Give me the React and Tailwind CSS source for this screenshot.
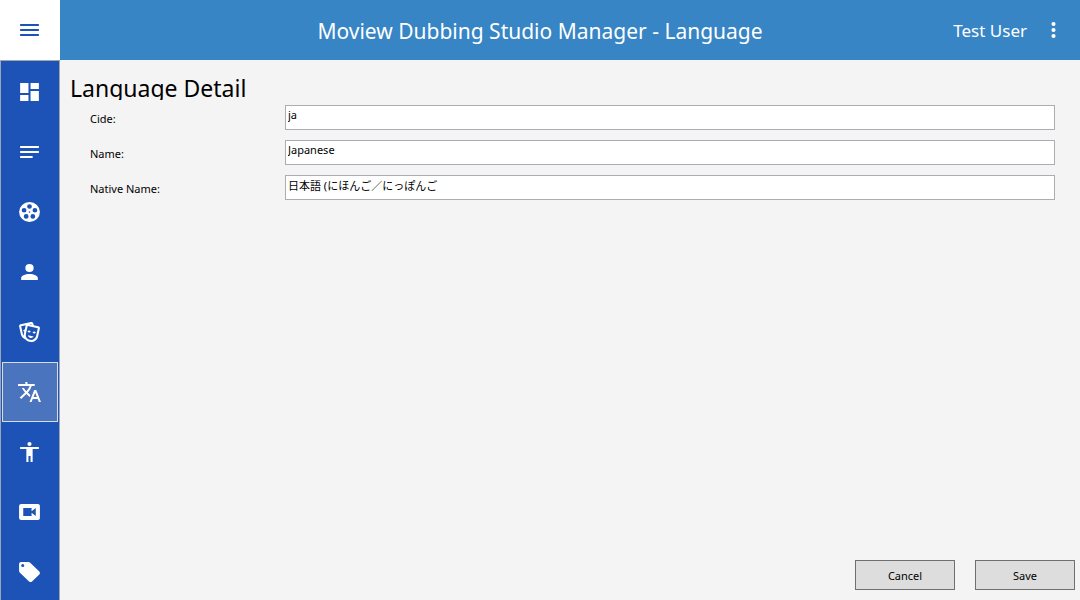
import React from "react";

const ICONS = {
  menu: "M3,6H21V8H3V6M3,11H21V13H3V11M3,16H21V18H3V16Z",
  dashboard: "M13,3V9H21V3M13,21H21V11H13M3,21H11V15H3M3,13H11V3H3V13Z",
  notes: "M3,6H21V8H3V6M3,11H21V13H3V11M3,16H15V18H3V16Z",
  reel:
    "M12,2A10,10 0 0,1 22,12A10,10 0 0,1 12,22A10,10 0 0,1 2,12A10,10 0 0,1 12,2M12,4.2A2.3,2.3 0 0,0 12,8.8A2.3,2.3 0 0,0 12,4.2M6.8,8A2.3,2.3 0 0,0 6.8,12.6A2.3,2.3 0 0,0 6.8,8M17.2,8A2.3,2.3 0 0,0 17.2,12.6A2.3,2.3 0 0,0 17.2,8M8.8,14.1A2.3,2.3 0 0,0 8.8,18.7A2.3,2.3 0 0,0 8.8,14.1M15.2,14.1A2.3,2.3 0 0,0 15.2,18.7A2.3,2.3 0 0,0 15.2,14.1M12,11.2A0.8,0.8 0 0,0 12,12.8A0.8,0.8 0 0,0 12,11.2Z",
  person:
    "M12,4A4,4 0 0,1 16,8A4,4 0 0,1 12,12A4,4 0 0,1 8,8A4,4 0 0,1 12,4M12,14C16.42,14 20,15.79 20,18V20H4V18C4,15.79 7.58,14 12,14Z",
  masks:
    "M8.11,19.45C5.94,18.65 4.22,16.78 3.71,14.35L2.05,6.54C1.81,5.46 2.5,4.4 3.58,4.17L13.35,2.1L13.38,2.09C14.45,1.88 15.5,2.57 15.72,3.63L16.07,5.3L20.42,6.23H20.45C21.5,6.47 22.18,7.53 21.96,8.59L20.3,16.41C19.5,20.18 15.78,22.6 12,21.79C10.42,21.46 9.08,20.61 8.11,19.45V19.45M20,8.18L10.23,6.1L8.57,13.92V13.95C8,16.63 9.73,19.27 12.42,19.84C15.11,20.41 17.77,18.69 18.34,16L20,8.18M16,16.5C15.37,17.57 14.11,18.16 12.83,17.89C11.56,17.62 10.65,16.57 10.5,15.34L16,16.5M8.47,5.17L4,6.13L5.66,13.94L5.67,13.97C5.82,14.68 6.12,15.32 6.53,15.87C6.43,15.1 6.45,14.3 6.62,13.5L7.05,11.5C6.6,11.42 6.21,11.17 6,10.81C6.06,10.2 6.56,9.66 7.25,9.5C7.33,9.5 7.4,9.5 7.5,9.5L8.28,5.69C8.32,5.5 8.38,5.33 8.47,5.17M15.03,12.23C15.35,11.7 16.03,11.42 16.72,11.57C17.41,11.71 17.91,12.24 18,12.86C17.67,13.38 17,13.66 16.3,13.5C15.61,13.37 15.11,12.84 15.03,12.23M10.15,11.19C10.47,10.66 11.14,10.38 11.83,10.53C12.5,10.67 13.03,11.21 13.11,11.82C12.78,12.34 12.11,12.63 11.42,12.5C10.73,12.33 10.23,11.8 10.15,11.19M11.97,4.43L13.93,4.85L13.77,4.05L11.97,4.43Z",
  translate:
    "M12.87,15.07L10.33,12.56L10.36,12.53C12.1,10.59 13.34,8.36 14.07,6H17V4H10V2H8V4H1V6H12.17C11.5,7.92 10.44,9.75 9,11.35C8.07,10.32 7.3,9.19 6.69,8H4.69C5.42,9.63 6.42,11.17 7.67,12.56L2.58,17.58L4,19L9,14L12.11,17.11L12.87,15.07M18.5,10H16.5L12,22H14L15.12,19H19.87L21,22H23L18.5,10M15.88,17L17.5,12.67L19.12,17H15.88Z",
  accessibility:
    "M12,2A2,2 0 0,1 14,4A2,2 0 0,1 12,6A2,2 0 0,1 10,4A2,2 0 0,1 12,2M21,9H15V22H13V16H11V22H9V9H3V7H21V9Z",
  video:
    "M18,16L14,12.8V16H6V8H14V11.2L18,8M20,4H4A2,2 0 0,0 2,6V18A2,2 0 0,0 4,20H20A2,2 0 0,0 22,18V6A2,2 0 0,0 20,4Z",
  tag: "M5.5,7A1.5,1.5 0 0,1 4,5.5A1.5,1.5 0 0,1 5.5,4A1.5,1.5 0 0,1 7,5.5A1.5,1.5 0 0,1 5.5,7M21.41,11.58L12.41,2.58C12.05,2.22 11.55,2 11,2H4C2.89,2 2,2.89 2,4V11C2,11.55 2.22,12.05 2.59,12.41L11.58,21.41C11.95,21.77 12.45,22 13,22C13.55,22 14.05,21.77 14.41,21.41L21.41,14.41C21.78,14.05 22,13.55 22,13C22,12.44 21.77,11.94 21.41,11.58Z",
  dots: "M12,16A2,2 0 0,1 14,18A2,2 0 0,1 12,20A2,2 0 0,1 10,18A2,2 0 0,1 12,16M12,10A2,2 0 0,1 14,12A2,2 0 0,1 12,14A2,2 0 0,1 10,12A2,2 0 0,1 12,10M12,4A2,2 0 0,1 14,6A2,2 0 0,1 12,8A2,2 0 0,1 10,6A2,2 0 0,1 12,4Z",
};

const NAV = [
  ["dashboard", "Dashboard"],
  ["notes", "Notes"],
  ["reel", "Movies"],
  ["person", "People"],
  ["masks", "Characters"],
  ["translate", "Languages"],
  ["accessibility", "Roles"],
  ["video", "Videos"],
  ["tag", "Tags"],
];

const FIELDS = [
  ["code", "Cide:", "ja"],
  ["name", "Name:", "Japanese"],
  ["native", "Native Name:", "日本語 (にほんご／にっぽんご"],
];

function Icon({ name }) {
  return (
    <svg
      viewBox="0 0 24 24"
      preserveAspectRatio="none"
      fill="currentColor"
      aria-hidden="true"
      className="h-6 w-[25px] shrink-0"
    >
      <path d={ICONS[name]} />
    </svg>
  );
}

function NavButton({ icon, label, active }) {
  return (
    <button
      type="button"
      aria-label={label}
      aria-current={active ? "page" : undefined}
      className={
        active
          ? "flex h-[60px] w-full shrink-0 items-center justify-center border border-[#d9dde5] bg-[#4b74be] pr-px"
          : "flex h-[60px] w-full shrink-0 items-center justify-center pr-px"
      }
    >
      <Icon name={icon} />
    </button>
  );
}

function Field({ id, label, value }) {
  return (
    <div className="flex items-center">
      <label htmlFor={id} className="w-[195px] shrink-0 pt-0.5">
        {label}
      </label>
      <input
        id={id}
        type="text"
        defaultValue={value}
        className="h-[25px] min-w-0 flex-1 border border-[#abadb3] bg-white px-0.5 pb-1.5 outline-none"
      />
    </div>
  );
}

function ActionButton({ children }) {
  return (
    <button type="button" className="h-[30px] w-[100px] border border-[#707070] bg-[#dddddd] pt-0.5">
      {children}
    </button>
  );
}

export default function App() {
  return (
    <div className="flex h-screen flex-col bg-[#f4f4f4] font-['Noto_Sans','Noto_Sans_CJK_JP',sans-serif] text-[11px] leading-4 text-black">
      <header className="flex h-[60px] shrink-0 bg-[#3785c5] text-white">
        <button
          type="button"
          aria-label="Menu"
          className="flex w-[60px] shrink-0 items-center justify-center bg-white pr-px text-[#1d53b7]"
        >
          <Icon name="menu" />
        </button>
        <div className="grid flex-1 grid-cols-[100px_1fr_160px] items-center">
          <h1 className="col-start-2 pt-0.5 text-center text-[21px] leading-7 whitespace-nowrap">
            Moview Dubbing Studio Manager - Language
          </h1>
          <div className="flex items-center justify-end gap-3.5 pr-3.5">
            <span className="pt-0.5 text-[17px] leading-6">Test User</span>
            <button type="button" aria-label="More options">
              <Icon name="dots" />
            </button>
          </div>
        </div>
      </header>
      <div className="flex min-h-0 flex-1">
        <nav
          aria-label="Main"
          className="flex w-[60px] shrink-0 flex-col overflow-hidden border-x border-t border-[#a0a6b0] bg-[#1d53b7] px-px pt-px text-white"
        >
          {NAV.map(([icon, label]) => (
            <NavButton key={icon} icon={icon} label={label} active={icon === "translate"} />
          ))}
        </nav>
        <main className="flex min-w-0 flex-1 flex-col">
          <h2 className="ml-2.5 h-10 overflow-hidden pt-3 text-[23px] leading-8">Language Detail</h2>
          <form className="flex flex-1 flex-col">
            <div className="flex flex-col gap-2.5 pt-[5px] pr-[25px] pl-[30px]">
              {FIELDS.map(([id, label, value]) => (
                <Field key={id} id={id} label={label} value={value} />
              ))}
            </div>
            <div className="mt-auto flex justify-end gap-5 pr-[5px] pb-2.5">
              <ActionButton>Cancel</ActionButton>
              <ActionButton>Save</ActionButton>
            </div>
          </form>
        </main>
      </div>
    </div>
  );
}
